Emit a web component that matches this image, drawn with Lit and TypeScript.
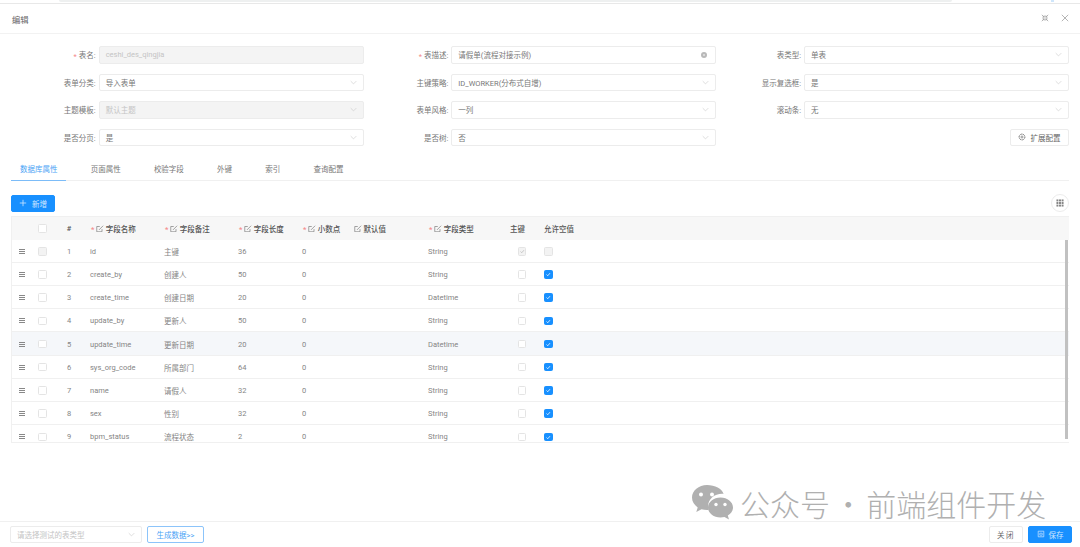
import { LitElement, html, css, svg } from "lit";
import { customElement } from "lit/decorators.js";

const chevron = html`<svg class="chev" viewBox="0 0 10 10"><path d="M1 3l4 4 4-4" fill="none" stroke="currentColor" stroke-width="0.8" /></svg>`;
const editIcon = html`<svg class="edit" viewBox="0 0 10 10"><path d="M8 5.5v3.5h-7v-7h4" fill="none" stroke="currentColor" stroke-width="0.9" /><path d="M4 6.5l5.5-5.500" fill="none" stroke="currentColor" stroke-width="0.9" /></svg>`;
const tick = svg`<path d="M2 4.6l1.6 1.6 2.9-3.4" fill="none" stroke="currentColor" stroke-width="1" />`;

type Field = { label: string; value?: string; req?: boolean; disabled?: boolean; kind?: string };

const fields: Field[] = [
  { label: "表名", value: "ceshi_des_qingjia", req: true, disabled: true, kind: "input" },
  { label: "表描述", value: "请假单(流程对接示例)", req: true, kind: "clear" },
  { label: "表类型", value: "单表" },
  { label: "表单分类", value: "导入表单" },
  { label: "主键策略", value: "ID_WORKER(分布式自增)" },
  { label: "显示复选框", value: "是" },
  { label: "主题模板", value: "默认主题", disabled: true },
  { label: "表单风格", value: "一列" },
  { label: "滚动条", value: "无" },
  { label: "是否分页", value: "是" },
  { label: "是否树", value: "否" },
];

const tabs = ["数据库属性", "页面属性", "校验字段", "外键", "索引", "查询配置"];

const columns = [
  { label: "字段名称", req: true, edit: true },
  { label: "字段备注", req: true, edit: true },
  { label: "字段长度", req: true, edit: true },
  { label: "小数点", req: true, edit: true },
  { label: "默认值", req: false, edit: true },
  { label: "字段类型", req: true, edit: true },
  { label: "主键", req: false, edit: false },
  { label: "允许空值", req: false, edit: false },
];

const rows = [
  ["id", "主键", "36", "String"],
  ["create_by", "创建人", "50", "String"],
  ["create_time", "创建日期", "20", "Datetime"],
  ["update_by", "更新人", "50", "String"],
  ["update_time", "更新日期", "20", "Datetime"],
  ["sys_org_code", "所属部门", "64", "String"],
  ["name", "请假人", "32", "String"],
  ["sex", "性别", "32", "String"],
  ["bpm_status", "流程状态", "2", "String"],
];

@customElement("app-root")
export class AppRoot extends LitElement {
  static styles = css`
    :host {
      display: block;
      font-family: Roboto, "Noto Sans CJK SC", sans-serif;
      font-size: 7.5px;
      color: #777;
      background: #fff;
    }
    .page {
      height: 547px;
      display: flex;
      flex-direction: column;
      position: relative;
      overflow: hidden;
    }
    .strip {
      height: 4px;
      flex: none;
      box-sizing: border-box;
      border-bottom: 1px solid #e8e8e8;
      padding: 0 128px 0 59px;
    }
    .strip div {
      height: 2px;
      background: #eef0f0;
      border-radius: 0 0 2px 2px;
    }
    .dot {
      position: absolute;
      left: 1051px;
      top: 0;
      width: 3px;
      height: 2px;
      background: #cfe6fb;
    }
    .head {
      height: 30px;
      flex: none;
      box-sizing: border-box;
      border-bottom: 1px solid #f2f2f2;
      display: flex;
      align-items: center;
      padding: 1px 11px 0 12px;
      font-size: 8.4px;
      color: #666;
    }
    .head .tools {
      margin-left: auto;
      display: flex;
      align-items: center;
      gap: 12px;
      color: #8a8a8a;
      margin-top: -3px;
    }
    .head svg {
      width: 8px;
      height: 8px;
      display: block;
    }
    .form {
      flex: none;
      display: grid;
      grid-template-columns: repeat(3, 1fr);
      row-gap: 10px;
      padding: 12px 11px 0;
    }
    .item {
      display: flex;
      align-items: center;
      justify-content: flex-end;
      height: 17.5px;
    }
    .item label {
      margin-right: 3px;
      color: #777;
      white-space: nowrap;
    }
    .star {
      color: #f58a8a;
      margin-right: 2px;
      display: inline-block;
      transform: translateY(1px);
    }
    .control {
      width: 265px;
      height: 17.5px;
      box-sizing: border-box;
      border: 1px solid #ececec;
      border-radius: 2px;
      display: flex;
      align-items: center;
      padding: 0 6px;
      color: #777;
      background: #fff;
    }
    .control.off {
      background: #f4f4f4;
      color: #c4c4c4;
    }
    .chev {
      width: 7px;
      height: 7px;
      margin-left: auto;
      color: #c4c4c4;
    }
    .clear {
      width: 6px;
      height: 6px;
      margin-left: auto;
      margin-right: 2px;
      display: block;
    }
    .config {
      display: flex;
      justify-content: flex-end;
      align-items: center;
    }
    .btn {
      height: 17px;
      box-sizing: border-box;
      border: 1px solid #ececec;
      border-radius: 2px;
      display: flex;
      align-items: center;
      justify-content: center;
      gap: 4px;
      background: #fff;
      color: #666;
    }
    .config .btn {
      width: 59px;
      height: 17.5px;
    }
    .btn svg {
      width: 8px;
      height: 8px;
    }
    .tabs {
      flex: none;
      display: flex;
      margin: 12px 11px 0;
      border-bottom: 1px solid #f0f0f0;
      height: 23px;
      box-sizing: border-box;
    }
    .tab {
      padding: 0 8px 0 9px;
      margin-right: 16.2px;
      line-height: 23px;
      color: #777;
      white-space: nowrap;
    }
    .tab.on {
      color: #4aa3f5;
      border-bottom: 1px solid #7cbcf8;
      height: 22px;
      box-sizing: content-box;
    }
    .bar {
      flex: none;
      display: flex;
      justify-content: space-between;
      align-items: center;
      margin: 13.5px 11px 0;
      height: 17px;
    }
    .primary {
      background: #1890ff;
      border-color: #1890ff;
      color: #cfe7ff;
    }
    .bar .primary {
      width: 44px;
      height: 17px;
      gap: 5px;
    }
    .round {
      width: 18px;
      height: 18px;
      box-sizing: border-box;
      border: 1px solid #ececec;
      border-radius: 50%;
      display: flex;
      align-items: center;
      justify-content: center;
      color: #858585;
    }
    .round svg {
      width: 8px;
      height: 8px;
    }
    .table {
      flex: none;
      margin: 4.5px 11px 0;
      height: 227px;
      overflow: hidden;
      position: relative;
      box-sizing: border-box;
      border: 1px solid #f0f0f0;
      border-top: none;
      border-right: none;
    }
    .row {
      display: grid;
      grid-template-columns: 20px 21px 32px 74px 74px 64px 52px 74px 82px 34px 1fr;
      align-items: center;
      height: 23.2px;
      padding-top: 1px;
      box-sizing: border-box;
      border-bottom: 1px solid #f0f0f0;
    }
    .row.header {
      height: 23.7px;
      padding-top: 0;
      background: #f7f7f7;
      border-top: 1px solid #f0f0f0;
      border-bottom: none;
      font-weight: 500;
    }
    .row.hover {
      background: #f5f7fa;
    }
    .cell {
      padding-left: 5px;
      display: flex;
      align-items: center;
      white-space: nowrap;
      color: #858585;
    }
    .header .cell {
      color: #555;
    }
    .center {
      padding-left: 0;
      justify-content: center;
    }
    .header .star {
      margin: 0 2px 0 1px;
    }
    .edit {
      width: 7.5px;
      height: 7.5px;
      margin-right: 2px;
      color: #777;
      flex: none;
    }
    .drag {
      width: 6px;
      height: 5px;
      margin-left: 7px;
      border-top: 1px solid #888;
      border-bottom: 1px solid #888;
      position: relative;
      box-sizing: border-box;
    }
    .drag::after {
      content: "";
      position: absolute;
      left: 0;
      right: 0;
      top: 1px;
      height: 1px;
      background: #888;
    }
    .check {
      width: 8.5px;
      height: 8.5px;
      display: block;
      box-sizing: border-box;
      border: 1px solid #e4e4e4;
      border-radius: 1.5px;
      background: #fff;
      color: #fff;
    }
    .check.off {
      background: #f3f3f3;
      color: #bbb;
    }
    .check.on {
      background: #1890ff;
      border-color: #1890ff;
    }
    .check svg {
      display: block;
      width: 100%;
      height: 100%;
    }
    .scroll {
      position: absolute;
      right: 1px;
      top: 24px;
      bottom: 3px;
      width: 3px;
      background: #c1c1c1;
    }
    .foot {
      margin-top: auto;
      flex: none;
      height: 26px;
      box-sizing: border-box;
      border-top: 1px solid #f0f0f0;
      display: flex;
      align-items: center;
      padding: 0 8px 1px 10px;
    }
    .foot .control {
      width: 132px;
      height: 17px;
      color: #c4c4c4;
    }
    .outline {
      width: 57px;
      margin-left: 5px;
      border-color: #8cc4fa;
      color: #4aa3f5;
    }
    .close {
      width: 34px;
      margin-left: auto;
      letter-spacing: 1.5px;
    }
    .foot .primary {
      width: 44px;
      margin-left: 5px;
    }
    .mark {
      position: absolute;
      left: 692px;
      top: 485px;
      display: flex;
      align-items: center;
      gap: 7px;
      color: #b0b0b0;
      font-size: 30px;
      line-height: 34px;
      white-space: nowrap;
      word-spacing: -3.5px;
      font-weight: 300;
      font-family: "Noto Sans CJK SC", sans-serif;
      pointer-events: none;
    }
    .mark svg {
      width: 41px;
      height: 35px;
      display: block;
    }
  `;

  renderField(f: Field) {
    return html`
      <div class="item">
        <label>${f.req ? html`<span class="star">*</span>` : ""}${f.label}:</label>
        <div class="control ${f.disabled ? "off" : ""}">
          ${f.value}
          ${f.kind === "clear"
            ? html`<svg class="clear" viewBox="0 0 6 6"><circle cx="3" cy="3" r="3" fill="#b9b9b9" /><path d="M2 2l2 2M4 2l-2 2" stroke="#eee" stroke-width="0.6" /></svg>`
            : f.kind === "input"
              ? ""
              : chevron}
        </div>
      </div>
    `;
  }

  renderCheck(kind: string) {
    return html`<span class="check ${kind}">
      ${kind === "on" || kind === "off tick"
        ? html`<svg viewBox="0 0 8.5 8.5">${tick}</svg>`
        : ""}
    </span>`;
  }

  render() {
    return html`
      <div class="page">
        <div class="strip"><div></div></div>
        <div class="dot"></div>
        <div class="head">
          编辑
          <div class="tools">
            <svg viewBox="0 0 10 10"><path d="M1 1l3 3M4 1.8v2.2h-2.2M9 1l-3 3M6 1.8v2.2h2.2M1 9l3-3M4 8.2v-2.2h-2.2M9 9l-3-3M6 8.2v-2.2h2.2" fill="none" stroke="currentColor" stroke-width="0.8" /></svg>
            <svg viewBox="0 0 10 10"><path d="M1 1l8 8M9 1l-8 8" fill="none" stroke="currentColor" stroke-width="0.8" /></svg>
          </div>
        </div>

        <div class="form">
          ${fields.map((f) => this.renderField(f))}
          <div class="config">
            <div class="btn">
              <svg viewBox="0 0 10 10"><circle cx="5" cy="5" r="3.6" fill="none" stroke="currentColor" stroke-width="1.2" stroke-dasharray="1.6 0.6" /><circle cx="5" cy="5" r="1.3" fill="none" stroke="currentColor" stroke-width="0.8" /></svg>
              扩展配置
            </div>
          </div>
        </div>

        <div class="tabs">
          ${tabs.map((t, i) => html`<div class="tab ${i === 0 ? "on" : ""}">${t}</div>`)}
        </div>

        <div class="bar">
          <div class="btn primary">
            <svg viewBox="0 0 10 10"><path d="M5 1v8M1 5h8" fill="none" stroke="currentColor" stroke-width="1" /></svg>
            新增
          </div>
          <div class="round">
            <svg viewBox="0 0 9 9" fill="currentColor">
              <rect x="0.5" y="0.5" width="2.2" height="2.2" /><rect x="3.4" y="0.5" width="2.2" height="2.2" /><rect x="6.3" y="0.5" width="2.2" height="2.2" />
              <rect x="0.5" y="3.4" width="2.2" height="2.2" /><rect x="3.4" y="3.4" width="2.2" height="2.2" /><rect x="6.3" y="3.4" width="2.2" height="2.2" />
              <rect x="0.5" y="6.3" width="2.2" height="2.2" /><rect x="3.4" y="6.3" width="2.2" height="2.2" /><rect x="6.3" y="6.3" width="2.2" height="2.2" />
            </svg>
          </div>
        </div>

        <div class="table">
          <div class="row header">
            <div></div>
            <div class="cell center">${this.renderCheck("")}</div>
            <div class="cell center">#</div>
            ${columns.map(
              (c) => html`<div class="cell">
                ${c.req ? html`<span class="star">*</span>` : ""}${c.edit ? editIcon : ""}${c.label}
              </div>`
            )}
          </div>
          ${rows.map(
            (r, i) => html`
              <div class="row ${i === 4 ? "hover" : ""}">
                <div><div class="drag"></div></div>
                <div class="cell center">${this.renderCheck(i === 0 ? "off" : "")}</div>
                <div class="cell center">${i + 1}</div>
                <div class="cell">${r[0]}</div>
                <div class="cell">${r[1]}</div>
                <div class="cell">${r[2]}</div>
                <div class="cell">0</div>
                <div class="cell"></div>
                <div class="cell">${r[3]}</div>
                <div class="cell center">${this.renderCheck(i === 0 ? "off tick" : "")}</div>
                <div class="cell">${this.renderCheck(i === 0 ? "off" : "on")}</div>
              </div>
            `
          )}
          <div class="scroll"></div>
        </div>

        <div class="foot">
          <div class="control">请选择测试的表类型 ${chevron}</div>
          <div class="btn outline">生成数据>></div>
          <div class="btn close">关闭</div>
          <div class="btn primary">
            <svg viewBox="0 0 10 10"><path d="M1.5 1.5h7v7h-7z" fill="none" stroke="currentColor" stroke-width="0.9" /><path d="M3.5 4h3v2.5h-3z" fill="none" stroke="currentColor" stroke-width="0.8" /></svg>
            保存
          </div>
        </div>

        <div class="mark">
          <svg viewBox="0 0 41 35">
            <path d="M15 0C6.7 0 0 5.6 0 12.6c0 4 2.2 7.5 5.7 9.8L4.3 27l5.2-2.8c1.7.5 3.5.8 5.5.8.6 0 1.1 0 1.7-.1-.4-1.2-.6-2.5-.6-3.8 0-6.8 6.3-12.3 14-12.3.5 0 1 0 1.5.1C30 3.6 23.1 0 15 0z" fill="currentColor" />
            <path d="M41 22.5c0-5.5-5.6-10-12.5-10S16 17 16 22.5 21.6 32.5 28.5 32.5c1.4 0 2.8-.2 4-.5L37 34.5l-1.2-4c3.200-1.900 5.200-4.800 5.200-8z" fill="currentColor" />
            <circle cx="9" cy="9.5" r="2" fill="#fff" /><circle cx="20" cy="9.5" r="2" fill="#fff" />
            <circle cx="24" cy="19.5" r="1.7" fill="#fff" /><circle cx="33" cy="19.5" r="1.7" fill="#fff" />
          </svg>
          <span>公众号 · 前端组件开发</span>
        </div>
      </div>
    `;
  }
}
